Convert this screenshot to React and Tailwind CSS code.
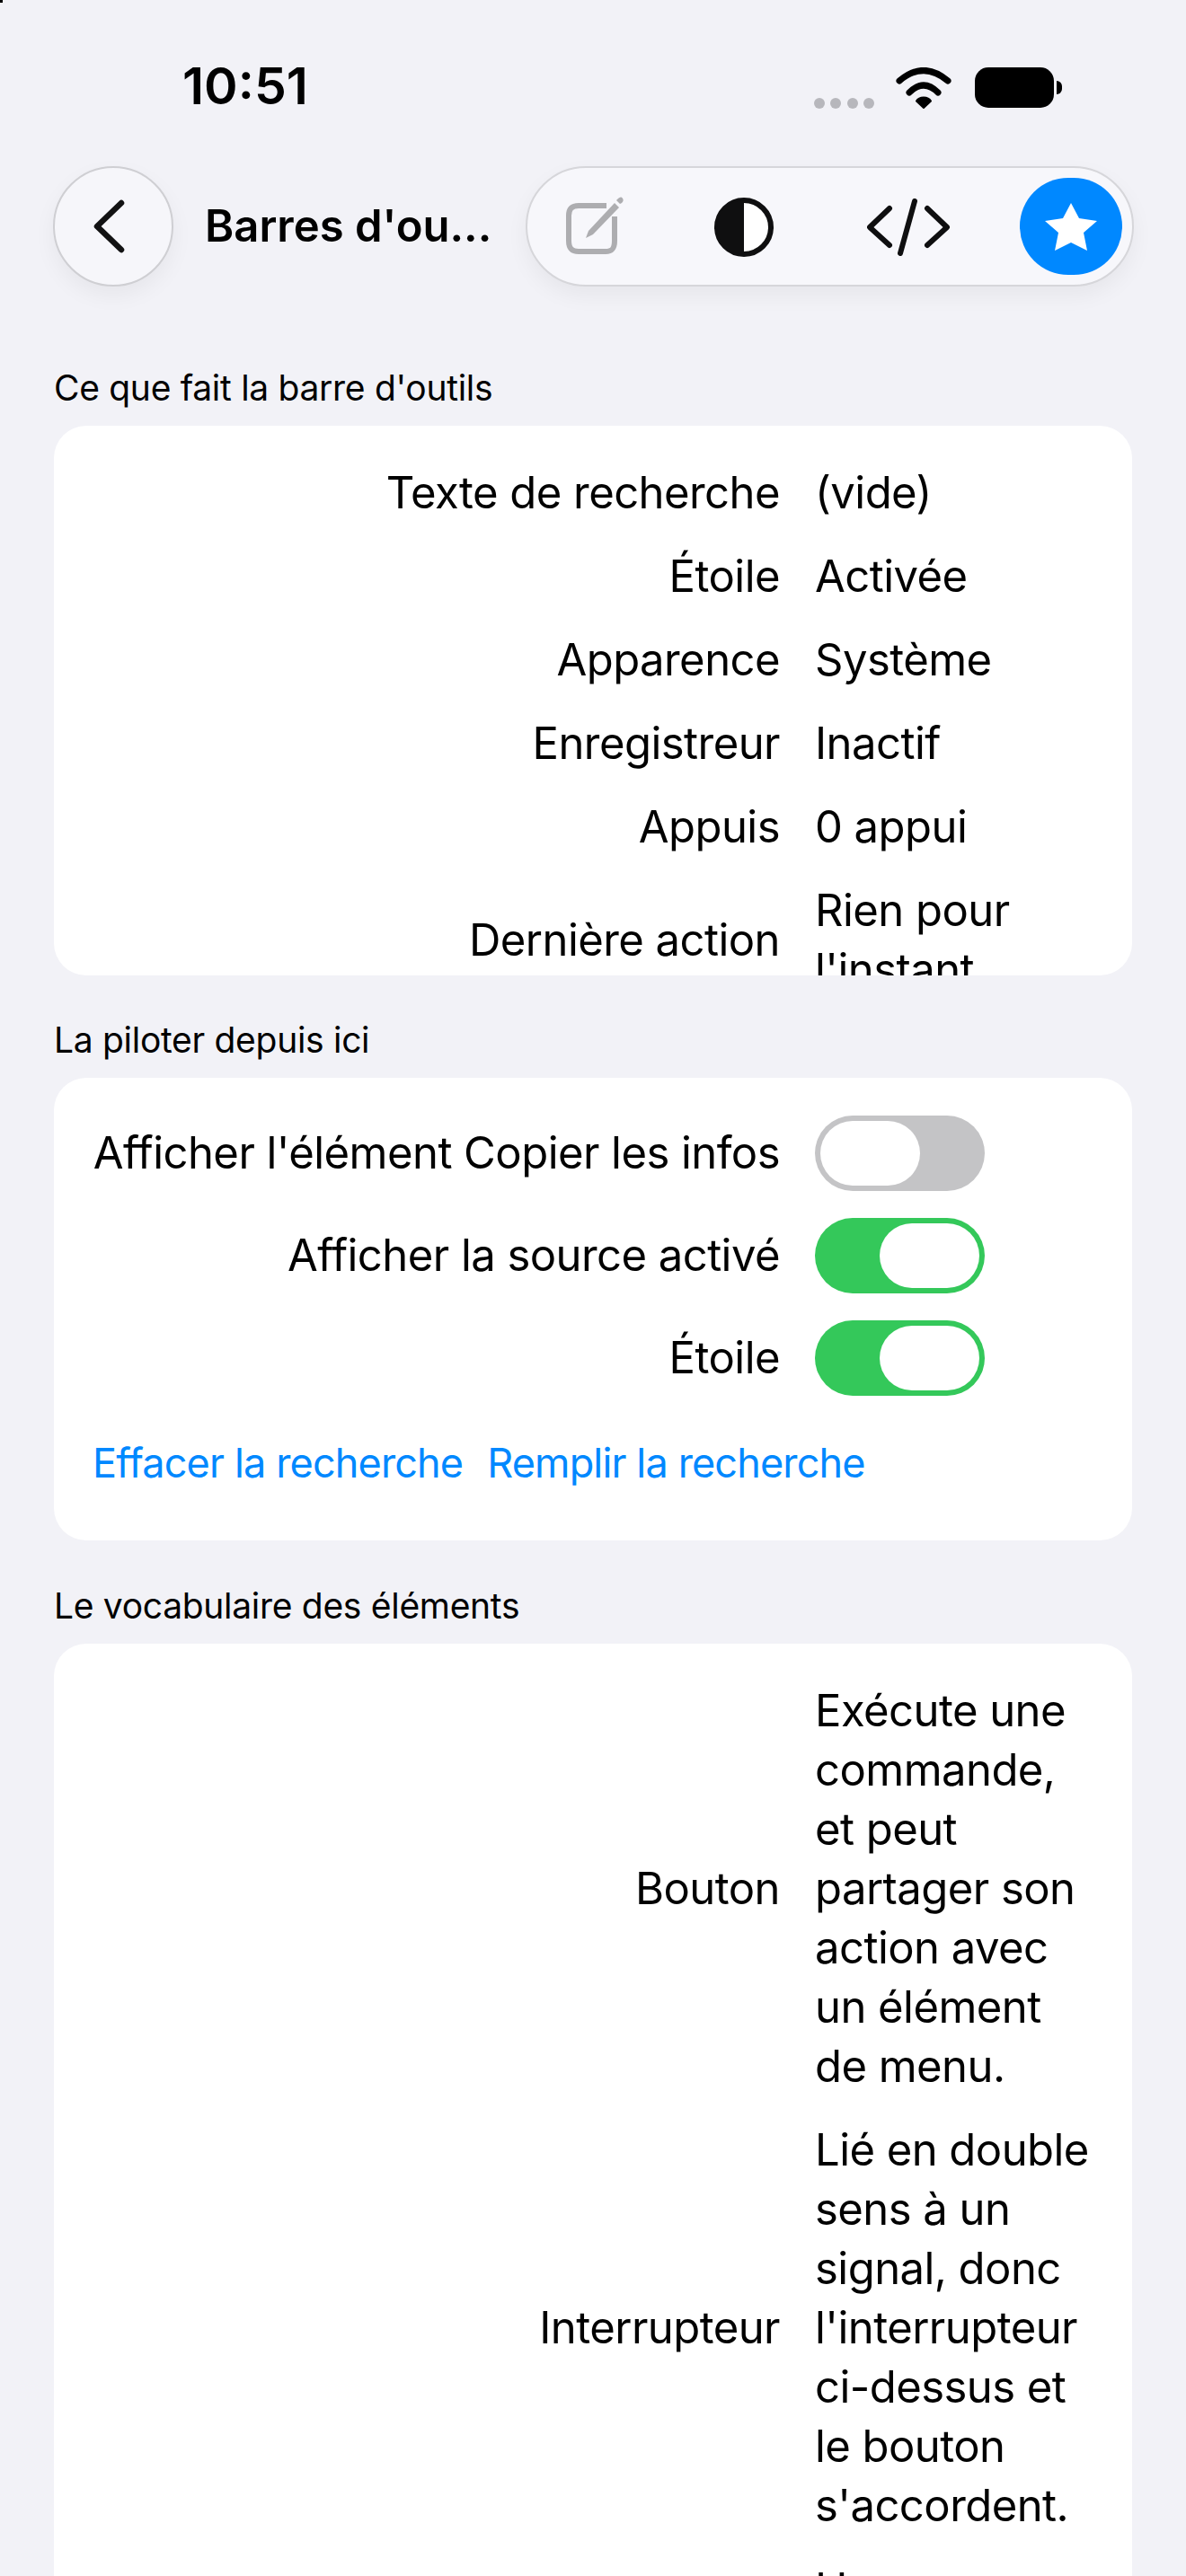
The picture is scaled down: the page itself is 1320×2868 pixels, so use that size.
import { Fragment } from 'react';

const STATUS_ROWS = [
  ['Texte de recherche', ['(vide)']],
  ['Étoile', ['Activée']],
  ['Apparence', ['Système']],
  ['Enregistreur', ['Inactif']],
  ['Appuis', ['0 appui']],
  ['Dernière action', ['Rien pour', "l'instant"]],
];

const VOCAB_ROWS = [
  ['Bouton', ['Exécute une', 'commande,', 'et peut', 'partager son', 'action avec', 'un élément', 'de menu.']],
  ['Interrupteur', ['Lié en double', 'sens à un', 'signal, donc', "l'interrupteur", 'ci-dessus et', 'le bouton', "s'accordent."]],
  ['', ['Un']],
];

function SectionLabel({ children }) {
  return <h2 className="px-[60px] text-[39px] leading-[48px] tracking-[-0.3px] text-black">{children}</h2>;
}

function LabelValueGrid({ rows }) {
  return (
    <div className="grid grid-cols-[808px_300px] gap-x-[39px] gap-y-[27px]">
      {rows.map(([label, lines]) => (
        <Fragment key={lines[0]}>
          <div className="self-center text-right">{label}</div>
          <div>
            {lines.map((line) => (
              <div key={line} className="whitespace-nowrap">{line}</div>
            ))}
          </div>
        </Fragment>
      ))}
    </div>
  );
}

function Toggle({ label, on }) {
  return (
    <div className="grid grid-cols-[808px_189px] items-center gap-x-[39px]">
      <div className="whitespace-nowrap text-right">{label}</div>
      <div className={`flex h-[84px] items-center rounded-full px-[6px] ${on ? 'justify-end bg-[#34c85a]' : 'justify-start bg-[#c4c4c6]'}`}>
        <div className="h-[72px] w-[111px] rounded-full bg-white" />
      </div>
    </div>
  );
}

function WifiIcon() {
  return (
    <svg width="62" height="46" viewBox="0 0 62 46" fill="none" stroke="black" strokeLinecap="round">
      <path d="M4 15Q31 -8 58 15" strokeWidth="7" />
      <path d="M15 28Q31 12 47 28" strokeWidth="7" />
      <path d="M31 45L23 37.5C26 32 36 32 39 37.5Z" fill="black" stroke="black" strokeWidth="2" strokeLinejoin="round" />
    </svg>
  );
}

function ComposeIcon() {
  return (
    <svg width="68" height="68" viewBox="0 0 68 68" fill="none" stroke="#adadb0">
      <path d="M47 11H16C8 11 5 15 5 22V50C5 58 8 62 16 62H46C54 62 56 58 56 50V23" strokeWidth="6" />
      <path d="M24 47L27 39L56 8L61 13L32 43Z" fill="#adadb0" stroke="none" />
      <path d="M60 3C62 1 64 1 65 3C66 4 66 6 64 8L62 9L58 5Z" fill="#adadb0" stroke="none" />
    </svg>
  );
}

function ContrastIcon() {
  return (
    <svg width="66" height="66" viewBox="0 0 66 66">
      <circle cx="33" cy="33" r="30" fill="white" stroke="#0f0f10" strokeWidth="6" />
      <path d="M33 3A30 30 0 0 0 33 63Z" fill="#0f0f10" />
    </svg>
  );
}

function CodeIcon() {
  return (
    <svg width="92" height="64" viewBox="0 0 92 64" fill="none" stroke="#0f0f10" strokeWidth="6" strokeLinecap="round" strokeLinejoin="round">
      <path d="M25 11L3 32L25 52" />
      <path d="M67 11L89 32L67 52" />
      <path d="M53 3L37 61" />
    </svg>
  );
}

function StarIcon() {
  return (
    <svg width="58" height="55" viewBox="0 0 58 55" fill="white">
      <path d="M29 1L38 18L58 21L43 34L47 54L29 45L11 54L15 34L0 21L20 18Z" />
    </svg>
  );
}

export default function App() {
  return (
    <div className="relative h-[2868px] w-[1320px] overflow-hidden bg-[#f2f2f7] text-[49px] leading-[66px] tracking-[-0.55px] text-black [font-family:Inter,sans-serif]">
      <div className="absolute left-0 top-0 h-[3px] w-[3px] bg-black" />

      {/* status bar */}
      <div className="flex h-[185px] items-start justify-between pt-[66px] pl-[203px] pr-[138px]">
        <span className="text-[57px] leading-[60px] font-semibold tracking-normal">10:51</span>
        <div className="flex items-start pt-[9px]">
          <div className="mt-[34px] mr-[24px] flex gap-[6.5px]">
            {[0, 1, 2, 3].map((dot) => (
              <div key={dot} className="h-[12px] w-[12px] rounded-full bg-[#b7b7bc]" />
            ))}
          </div>
          <div className="mr-[26px]"><WifiIcon /></div>
          <div className="flex items-center">
            <div className="h-[45px] w-[88px] rounded-[15px] bg-black" />
            <div className="ml-[3px] h-[15px] w-[6px] rounded-r-full bg-black" />
          </div>
        </div>
      </div>

      {/* toolbar */}
      <div className="flex h-[134px] items-center pl-[59px]">
        <button type="button" className="flex h-[134px] w-[134px] shrink-0 items-center justify-center rounded-full border-2 border-[#cfcfd3] bg-[#f6f6fa] pr-[10px] shadow-[0_10px_24px_rgba(0,0,0,0.05)]">
          <svg width="36" height="60" viewBox="0 0 36 60" fill="none" stroke="#121213" strokeWidth="6.5" strokeLinecap="round" strokeLinejoin="round">
            <path d="M32 4L5 30L32 56" />
          </svg>
        </button>
        <div className="ml-[35px] w-[357px] shrink-0 whitespace-nowrap text-[49px] font-semibold tracking-normal">Barres d'ou...</div>
        <div className="flex h-[134px] w-[677px] shrink-0 items-center rounded-full border-2 border-[#d6d6da] bg-[#f7f7fb] pl-[41px] pr-[11px] shadow-[0_10px_24px_rgba(0,0,0,0.05)]">
          <ComposeIcon />
          <div className="ml-[99px] mt-[2px]"><ContrastIcon /></div>
          <div className="ml-[104px] mt-[2px]"><CodeIcon /></div>
          <div className="ml-auto flex h-[108px] w-[114px] items-center justify-center rounded-full bg-[#0088ff]">
            <StarIcon />
          </div>
        </div>
      </div>

      <div className="pt-[89px]">
        <SectionLabel>Ce que fait la barre d'outils</SectionLabel>
        <div className="mx-[60px] mt-[18px] h-[612px] overflow-hidden rounded-[36px] bg-white pt-[42px]">
          <LabelValueGrid rows={STATUS_ROWS} />
        </div>
      </div>

      <div className="pt-[48px]">
        <SectionLabel>La piloter depuis ici</SectionLabel>
        <div className="mx-[60px] mt-[18px] flex h-[515px] flex-col rounded-[36px] bg-white pt-[42px]">
          <div className="flex flex-col gap-[30px]">
            <Toggle label="Afficher l'élément Copier les infos" on={false} />
            <Toggle label="Afficher la source activé" on />
            <Toggle label="Étoile" on />
          </div>
          <div className="mt-[42px] flex gap-[27px] pl-[43px] text-[45px] text-[#0088ff]">
            <button type="button" className="tracking-[-0.85px]">Effacer la recherche</button>
            <button type="button" className="tracking-[-0.85px]">Remplir la recherche</button>
          </div>
        </div>
      </div>

      <div className="pt-[49px]">
        <SectionLabel>Le vocabulaire des éléments</SectionLabel>
        <div className="mx-[60px] mt-[18px] rounded-[36px] bg-white pt-[42px]">
          <LabelValueGrid rows={VOCAB_ROWS} />
        </div>
      </div>
    </div>
  );
}
